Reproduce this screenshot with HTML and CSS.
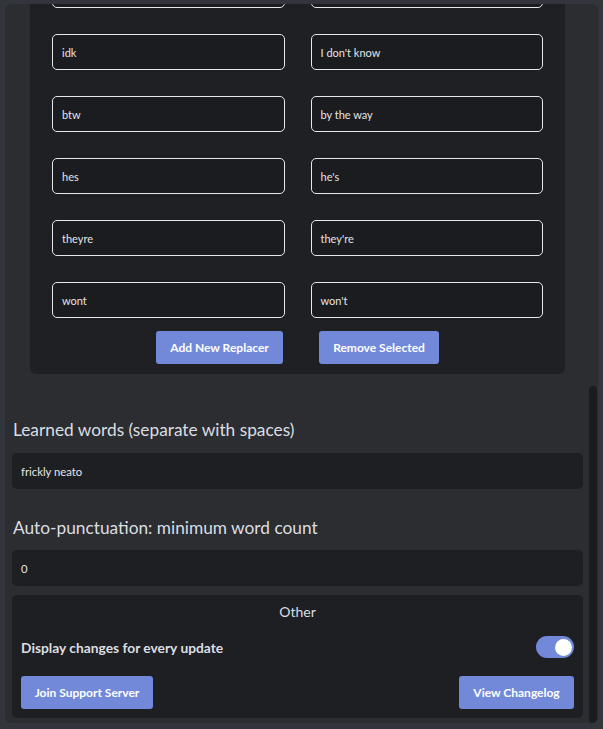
FILE: index.html
```html
<!DOCTYPE html>
<html>
<head>
<meta charset="utf-8">
<link rel="stylesheet" href="styles.css">
</head>
<body>
<div class="panel">
  <div class="content">
    <div class="replacers">
      <div class="grid">
        <div class="field"></div><div class="field"></div>
        <div class="field">idk</div><div class="field">I don't know</div>
        <div class="field">btw</div><div class="field">by the way</div>
        <div class="field">hes</div><div class="field">he's</div>
        <div class="field">theyre</div><div class="field">they're</div>
        <div class="field">wont</div><div class="field">won't</div>
      </div>
      <div class="actions">
        <button class="btn btn-add">Add New Replacer</button>
        <button class="btn btn-remove">Remove Selected</button>
      </div>
    </div>
    <div class="label label-first">Learned words (separate with spaces)</div>
    <div class="text-input">frickly neato</div>
    <div class="label label-second">Auto-punctuation: minimum word count</div>
    <div class="text-input">0</div>
    <div class="other">
      <div class="other-title">Other</div>
      <div class="toggle-row">
        <span class="toggle-label">Display changes for every update</span>
        <span class="toggle"><span class="knob"></span></span>
      </div>
      <div class="other-actions">
        <button class="btn btn-join">Join Support Server</button>
        <button class="btn btn-log">View Changelog</button>
      </div>
    </div>
  </div>
  <div class="scroll-thumb"></div>
</div>
</body>
</html>
```

FILE: styles.css
```css
html, body {
  margin: 0;
  padding: 0;
  background: #32353b;
  font-family: Lato, "Noto Sans", sans-serif;
}

body {
  height: 729px;
  overflow: hidden;
}

.panel {
  position: relative;
  margin: 4px 5px 0 5px;
  width: 593px;
  height: 719px;
  box-sizing: border-box;
  padding: 0 15px 0 7px;
  background: #2b2d31;
  border-radius: 6px;
  overflow: hidden;
}

.content {
  margin-top: -32px;
}

.replacers {
  margin: 0 18px;
  padding: 0 22px 10px;
  background: #1f2023;
  border-radius: 0 0 6px 6px;
}

.grid {
  display: grid;
  grid-template-columns: 1fr 1fr;
  column-gap: 26px;
  row-gap: 26px;
}

.field {
  height: 36px;
  box-sizing: border-box;
  border: 1px solid #e6e7ea;
  border-radius: 5px;
  background: #1b1c1f;
  padding-left: 9px;
  display: flex;
  align-items: center;
  font-size: 11px;
  color: #e3e4e6;
}

.actions {
  display: flex;
  justify-content: center;
  gap: 36px;
  margin-top: 13px;
}

.btn {
  height: 33px;
  border: none;
  border-radius: 3px;
  background: #7289da;
  color: #ffffff;
  font-family: Lato, "Noto Sans", sans-serif;
  font-size: 12px;
  font-weight: 700;
  padding: 0;
  cursor: pointer;
}

.btn-add { width: 127px; }
.btn-remove { width: 120px; }
.btn-join { width: 132px; }
.btn-log { width: 115px; }

.label {
  font-size: 17.3px;
  line-height: 20px;
  color: #dbdee1;
  padding-left: 1px;
}

.label-first {
  margin-top: 46px;
  margin-bottom: 13px;
}

.label-second {
  margin-top: 29px;
  margin-bottom: 12px;
}

.text-input {
  height: 36px;
  box-sizing: border-box;
  background: #1e1f22;
  border-radius: 5px;
  padding-left: 9px;
  display: flex;
  align-items: center;
  font-size: 11.3px;
  color: #e3e4e6;
}

.other {
  margin-top: 9px;
  height: 123px;
  box-sizing: border-box;
  background: #1e1f22;
  border-radius: 5px;
  padding: 8px 9px 9px;
  display: flex;
  flex-direction: column;
}

.other-title {
  text-align: center;
  font-size: 14px;
  line-height: 18px;
  color: #dbdee1;
}

.toggle-row {
  margin-top: 15px;
  display: flex;
  justify-content: space-between;
  align-items: center;
  height: 22px;
}

.toggle-label {
  font-size: 13.8px;
  font-weight: 700;
  color: #dbdee1;
}

.toggle {
  position: relative;
  width: 38px;
  height: 22px;
  border-radius: 11px;
  background: #7289da;
}

.knob {
  position: absolute;
  top: 2.5px;
  right: 2.5px;
  width: 17px;
  height: 17px;
  border-radius: 50%;
  background: #ffffff;
}

.other-actions {
  margin-top: 18px;
  display: flex;
  justify-content: space-between;
}

.scroll-thumb {
  position: absolute;
  right: 1px;
  top: 382px;
  bottom: 0;
  width: 8px;
  border-radius: 4px;
  background: #1b1c1f;
}
```
